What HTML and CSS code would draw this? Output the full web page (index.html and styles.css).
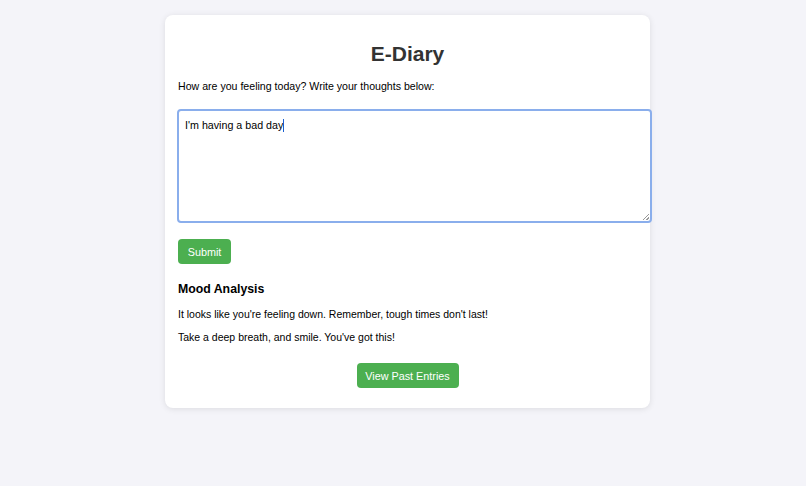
FILE: index.html
```html
<!DOCTYPE html>
<html>
<head>
<meta charset="utf-8">
<link rel="stylesheet" href="styles.css">
</head>
<body>
<div class="card">
  <h1 class="title">E-Diary</h1>
  <p class="prompt">How are you feeling today? Write your thoughts below:</p>
  <div class="entry">I'm having a bad day<span class="caret"></span><span class="grip"></span></div>
  <div class="row"><button class="btn">Submit</button></div>
  <h2 class="mood-title">Mood Analysis</h2>
  <p class="line">It looks like you're feeling down. Remember, tough times don't last!</p>
  <p class="line">Take a deep breath, and smile. You've got this!</p>
  <div class="center"><button class="btn">View Past Entries</button></div>
</div>
</body>
</html>
```
FILE: styles.css
```css
html, body {
  margin: 0;
  padding: 0;
}
body {
  background: #f4f4f9;
  font-family: "Liberation Sans", Arial, sans-serif;
  color: #000;
  width: 806px;
  height: 486px;
  overflow: hidden;
}
.card {
  box-sizing: border-box;
  width: 485px;
  margin: 15px 0 0 165px;
  padding: 13px 13px 20px 13px;
  background: #fff;
  border-radius: 8px;
  box-shadow: 0 1px 6px rgba(0, 0, 0, 0.1);
  display: flex;
  flex-direction: column;
}
.title {
  margin: 11px 0 10px;
  font-size: 21px;
  line-height: 30px;
  text-align: center;
  color: #333;
  font-weight: bold;
}
.prompt {
  margin: 0 0 15px;
  font-size: 10.6px;
  line-height: 15px;
}
.entry {
  position: relative;
  box-sizing: border-box;
  width: 475px;
  height: 114px;
  margin-left: -1px;
  padding: 6px 6px;
  border: 2px solid #8aaeec;
  border-radius: 4px;
  font-size: 10.7px;
  line-height: 16px;
  color: #000;
}
.caret {
  display: inline-block;
  width: 1px;
  height: 13px;
  background: #1a5fd0;
  vertical-align: -3px;
}
.grip {
  position: absolute;
  right: 1px;
  bottom: 1px;
  width: 6px;
  height: 6px;
  background: linear-gradient(135deg, transparent 45%, #999 45%, #999 55%, transparent 55%, transparent 75%, #999 75%, #999 85%, transparent 85%);
}
.row {
  margin-top: 16px;
  display: flex;
}
.btn {
  font-family: "Liberation Sans", Arial, sans-serif;
  background: #4caf50;
  color: #fff;
  border: none;
  border-radius: 4px;
  font-size: 10.8px;
  height: 25px;
  padding: 0;
}
.row .btn {
  width: 53px;
}
.mood-title {
  margin: 17px 0 9px;
  font-size: 12.3px;
  line-height: 17px;
  font-weight: bold;
}
.line {
  margin: 0 0 8px;
  font-size: 10.5px;
  line-height: 15px;
}
.center {
  margin-top: 10px;
  display: flex;
  justify-content: center;
}
.center .btn {
  width: 102px;
}
```
